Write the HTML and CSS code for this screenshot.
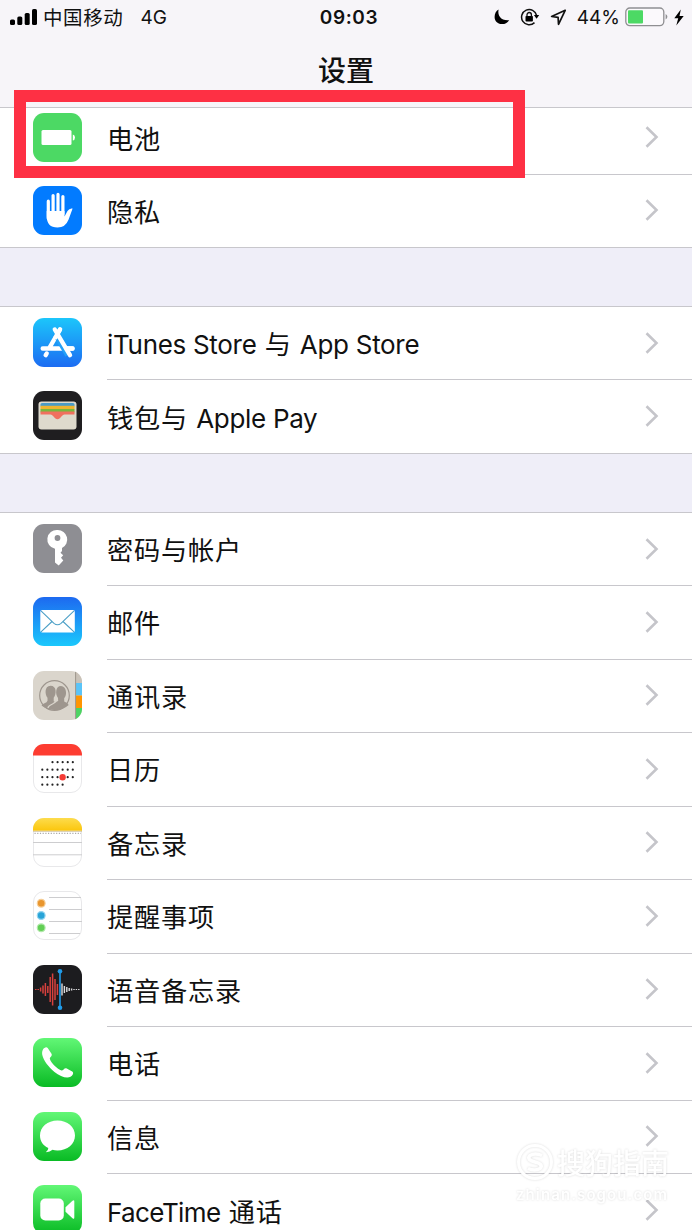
FILE: index.html
```html
<!DOCTYPE html>
<html lang="zh-CN">
<head>
    <meta charset="UTF-8">
    <meta name="viewport" content="width=device-width, initial-scale=1.0">
    <title>设置</title>
    <link rel="stylesheet" href="styles.css">
</head>
<body>
    <svg class="defs" width="0" height="0">
        <defs>
            <linearGradient id="green" x1="0" y1="0" x2="0" y2="1"><stop offset="0" stop-color="#62f776"/><stop offset="1" stop-color="#09bb24"/></linearGradient>
            <linearGradient id="store" x1="0" y1="0" x2="0" y2="1"><stop offset="0" stop-color="#1cc6fb"/><stop offset="1" stop-color="#1c6cf2"/></linearGradient>
            <linearGradient id="mail" x1="0" y1="0" x2="0" y2="1"><stop offset="0" stop-color="#1d69f0"/><stop offset="1" stop-color="#1bc8fc"/></linearGradient>
            <linearGradient id="yellow" x1="0" y1="0" x2="0" y2="1"><stop offset="0" stop-color="#fddc4d"/><stop offset="1" stop-color="#fbc60c"/></linearGradient>
            <clipPath id="tile"><rect width="49" height="49" rx="11"/></clipPath>
        </defs>
        <symbol id="chevron" viewBox="0 0 14 22"><path d="M1.5 1.2 11.5 11 1.5 20.8" fill="none" stroke="#c5c5ca" stroke-width="2.6"/></symbol>
    </svg>

    <header class="header">
        <div class="status">
            <div class="status-left">
                <svg class="signal" width="28" height="18" viewBox="0 0 28 18">
                    <rect x="0" y="11.5" width="5" height="5.5" rx="1.6"/>
                    <rect x="7.3" y="8.5" width="5" height="8.5" rx="1.6"/>
                    <rect x="14.7" y="5" width="5" height="12" rx="1.6"/>
                    <rect x="22" y="1" width="5" height="16" rx="1.6"/>
                </svg>
                <span class="carrier">中国移动</span>
                <span class="network">4G</span>
            </div>
            <div class="time">09:03</div>
            <div class="status-right">
                <svg width="16" height="16" viewBox="0 0 16 16"><path d="M4.6.5C3.2 6.7 7.2 12 15.2 11.2 13.2 14 10.5 15.3 7.8 15.1 3.5 15 .6 11.8.6 8 .6 4.8 2 2 4.6.5z"/></svg>
                <svg class="lock" width="20" height="18" viewBox="0 0 20 18">
                    <path d="M16.6 7.5A7.6 7.6 0 1 0 14.5 14.6" fill="none" stroke="#111" stroke-width="1.5"/>
                    <path d="M13.9 6.9h5.3l-2.6 3.8z"/>
                    <rect x="5.5" y="8" width="7.4" height="5.6" rx=".8"/>
                    <path d="M7 8.5V6.7a2.2 2.2 0 0 1 4.400 0v1.8" fill="none" stroke="#111" stroke-width="1.3"/>
                </svg>
                <svg class="arrow" width="17" height="17" viewBox="0 0 17 17"><path d="M15.2 1.3 1.6 7.5l6.500.9.400 6.900z" fill="none" stroke="#111" stroke-width="1.7" stroke-linejoin="round"/></svg>
                <span class="percent">44%</span>
                <svg class="power" width="43" height="20" viewBox="0 0 43 20">
                    <rect x=".8" y="1" width="38" height="17.6" rx="4" fill="#fbf9fc" stroke="#8f8f92" stroke-width="1.3"/>
                    <rect x="3" y="3.2" width="15" height="13.2" rx="1" fill="#4cd964"/>
                    <path d="M40.6 7v5.6q1.8-1 1.8-2.8t-1.8-2.8z" fill="#8f8f92"/>
                </svg>
                <svg class="bolt" width="10" height="17" viewBox="0 0 10 17"><path d="M6.8.5.3 9.2h3.9L2.3 16.5 9.7 7H5.5z"/></svg>
            </div>
        </div>
        <h1>设置</h1>
    </header>

    <main class="list">
        <section class="group first">
            <div class="row">
                <svg class="icon" viewBox="0 0 49 49">
                    <rect width="49" height="49" rx="11" fill="#4cd964"/>
                    <rect x="8.5" y="17" width="30" height="15" rx="1.5" fill="#fff"/>
                    <path d="M39.8 21.5q2.200.5 2.200 3t-2.200 3z" fill="#fff"/>
                </svg>
                <div class="cell"><span class="label">电池</span><svg class="chevron"><use href="#chevron"/></svg></div>
                <div class="highlight"></div>
            </div>
            <div class="row">
                <svg class="icon" viewBox="0 0 49 49">
                    <rect width="49" height="49" rx="11" fill="#027bff"/>
                    <g stroke="#fff" stroke-width="3.2" stroke-linecap="round"><path d="M15.3 15.2v17M20.1 9.600V28M25 8.400V28M29.9 10.600V28"/></g>
                    <path d="M13.7 25H31.5V30.5L34.5 25Q36.500 21.9 39.600 22.600L35.600 33.500Q32.500 41.500 24.500 41.500 13.700 41.500 13.700 30z" fill="#fff"/>
                </svg>
                <div class="cell"><span class="label">隐私</span><svg class="chevron"><use href="#chevron"/></svg></div>
            </div>
        </section>

        <section class="group">
            <div class="row">
                <svg class="icon" viewBox="0 0 49 49">
                    <rect width="49" height="49" rx="11" fill="url(#store)"/>
                    <g fill="none" stroke="#fff" stroke-width="4.4" stroke-linecap="round">
                        <path d="M27 11.5 16 30.500M9.700 30.500H39.500M13.700 35.500 12.700 37.200"/>
                    </g>
                    <path d="M22.500 15.500 35 37" stroke="#23a0f7" stroke-width="6.200"/>
                    <path d="M21.800 11.500 37 37.200" stroke="#fff" stroke-width="4.400" stroke-linecap="round"/>
                    <path d="M27 11.500 22.500 19.300M33.500 30.500H39.500" stroke="#fff" stroke-width="4.400" stroke-linecap="round"/>
                </svg>
                <div class="cell"><span class="label"><span class="en">iTunes Store</span> 与 <span class="en">App Store</span></span><svg class="chevron"><use href="#chevron"/></svg></div>
            </div>
            <div class="row">
                <svg class="icon" viewBox="0 0 49 49">
                    <rect width="49" height="49" rx="11" fill="#1f1e20"/>
                    <rect x="5.5" y="10.5" width="38" height="28" rx="3" fill="#dedacd"/>
                    <rect x="7.5" y="12" width="34" height="4" rx="1.5" fill="#4b9bc6"/>
                    <rect x="7.5" y="14.8" width="34" height="3.5" fill="#eeb52f"/>
                    <rect x="7.5" y="18" width="34" height="3.3" fill="#78b63d"/>
                    <path d="M7.5 20.5h34v3H31.500c-2.500 0-4 4.700-7 4.700s-4.500-4.700-7-4.700h-10z" fill="#f0705f"/>
                </svg>
                <div class="cell"><span class="label">钱包与 <span class="en">Apple Pay</span></span><svg class="chevron"><use href="#chevron"/></svg></div>
            </div>
        </section>

        <section class="group">
            <div class="row">
                <svg class="icon" viewBox="0 0 49 49">
                    <rect width="49" height="49" rx="11" fill="#8e8e93"/>
                    <path d="M24.5 6a9.5 9.5 0 0 1 4.5 18v3l-1.5 1.7 2.7 2.6-2.2 2.5 2.3 2.7L25.7 41.5 22 38.500V24.800A9.500 9.500 0 0 1 24.500 6z" fill="#fff"/>
                    <circle cx="24.5" cy="14" r="2.9" fill="#8e8e93"/>
                </svg>
                <div class="cell"><span class="label">密码与帐户</span><svg class="chevron"><use href="#chevron"/></svg></div>
            </div>
            <div class="row">
                <svg class="icon" viewBox="0 0 49 49">
                    <rect width="49" height="49" rx="11" fill="url(#mail)"/>
                    <rect x="7.3" y="13" width="34.5" height="22.5" rx="1.8" fill="#fff"/>
                    <path d="m8 13.8 13 12.5q3.5 3 7 0l13-12.5M8 34.8 19 24.5M41 34.8 30 24.5" fill="none" stroke="#4b9fc6" stroke-width="1.1"/>
                </svg>
                <div class="cell"><span class="label">邮件</span><svg class="chevron"><use href="#chevron"/></svg></div>
            </div>
            <div class="row">
                <svg class="icon" viewBox="0 0 49 49">
                    <g clip-path="url(#tile)">
                        <rect width="49" height="49" fill="#dad5cc"/>
                        <rect x="43" width="6" height="12" fill="#c9c2b8"/>
                        <rect x="43" y="12" width="6" height="12.5" fill="#5ac4f8"/>
                        <rect x="43" y="24.5" width="6" height="12.5" fill="#ff9501"/>
                        <rect x="43" y="37" width="6" height="12" fill="#4cd463"/>
                        <path d="M42.6 0v49" stroke="#9c968c" stroke-width="1"/>
                        <path d="M8.5 34.5q1.5-2 5-3.2l1-1.5v-3c-2.5-2.5-3.5-12 3-12s6 8.5 3.2 12v3.5l2 1.2c1-1 1.5-1.2 2.5-1.5l-.2-3c-3-4-2.5-12 3-12s6.5 9 3.2 12.2v3.3q3.5 1 4.5 3.5Q30 39 23 39.2 14 39 8.5 34.5z" fill="#9e968e"/>
                        <path d="M14.5 37.5q1-3 5-4.5l3-2" fill="none" stroke="#dad5cc" stroke-width="1.2"/>
                        <circle cx="21.5" cy="24.5" r="14.8" fill="none" stroke="#9e968e" stroke-width="1.2"/>
                    </g>
                </svg>
                <div class="cell"><span class="label">通讯录</span><svg class="chevron"><use href="#chevron"/></svg></div>
            </div>
            <div class="row">
                <svg class="icon" viewBox="0 0 49 49">
                    <rect x=".5" y=".5" width="48" height="48" rx="10.5" fill="#fff" stroke="#e8e8ea"/>
                    <path d="M0 11.5V11A11 11 0 0 1 11 0h27a11 11 0 0 1 11 11v.5z" fill="#fd3c31"/>
                    <g stroke="#222" stroke-width="2.2" stroke-linecap="round" stroke-dasharray="0 5.08">
                        <path d="M19.5 18.2H40.5M9.3 25.7H40.5M9.3 33.2H40.5M9.3 40.7H30.5"/>
                    </g>
                    <circle cx="29.6" cy="33.2" r="3.2" fill="#f43b35"/>
                </svg>
                <div class="cell"><span class="label">日历</span><svg class="chevron"><use href="#chevron"/></svg></div>
            </div>
            <div class="row">
                <svg class="icon" viewBox="0 0 49 49">
                    <rect x=".5" y=".5" width="48" height="48" rx="10.5" fill="#fff" stroke="#e8e8ea"/>
                    <path d="M0 12.8V11A11 11 0 0 1 11 0h27a11 11 0 0 1 11 11v1.8z" fill="url(#yellow)"/>
                    <path d="M0 13.3H49" stroke="#c9b98a" stroke-width=".8"/>
                    <path d="M1.5 15.3H48" stroke="#aaa" stroke-width="1.2" stroke-dasharray="1.2 1.5"/>
                    <path d="M0 24.5H49M0 36.8H49" stroke="#cdcdcf"/>
                </svg>
                <div class="cell"><span class="label">备忘录</span><svg class="chevron"><use href="#chevron"/></svg></div>
            </div>
            <div class="row">
                <svg class="icon" viewBox="0 0 49 49">
                    <rect x=".5" y=".5" width="48" height="48" rx="10.5" fill="#fff" stroke="#e8e8ea"/>
                    <path d="M16 6.5H48M16 18.5H49M16 30.5H49M16 42.5H47" stroke="#cdcdcf"/>
                    <circle cx="8.2" cy="12.2" r="3.9" fill="#e9962e" stroke="#f6cd95" stroke-width="1.2"/>
                    <circle cx="8.2" cy="24.5" r="3.9" fill="#28a4d8" stroke="#94d4ef" stroke-width="1.2"/>
                    <circle cx="8.2" cy="36.8" r="3.9" fill="#62cf55" stroke="#b1e8aa" stroke-width="1.2"/>
                </svg>
                <div class="cell"><span class="label">提醒事项</span><svg class="chevron"><use href="#chevron"/></svg></div>
            </div>
            <div class="row">
                <svg class="icon" viewBox="0 0 49 49">
                    <rect width="49" height="49" rx="11" fill="#1c1c1f"/>
                    <path d="M2.8 24v1M5.2 24v1M7.6 22.5v4M10 20.5v8M12.4 18v13M14.8 21v7M17.2 12v25M19.6 8.5v32M22 14v21M24.4 19v11" stroke="#d8403d" stroke-width="1.5"/>
                    <path d="M29 18.5v12M31.4 21v7M33.8 22v5M36.2 23v3M38.6 23.5v2M41 24v1M43.4 24v1M45.8 24v1" stroke="#dedee0" stroke-width="1.4"/>
                    <path d="M27 6v37" stroke="#209be8" stroke-width="1.6"/>
                    <circle cx="27" cy="6.2" r="2.3" fill="#209be8"/><circle cx="27" cy="42.8" r="2.3" fill="#209be8"/>
                </svg>
                <div class="cell"><span class="label">语音备忘录</span><svg class="chevron"><use href="#chevron"/></svg></div>
            </div>
            <div class="row">
                <svg class="icon" viewBox="0 0 49 49">
                    <rect width="49" height="49" rx="11" fill="url(#green)"/>
                    <path d="M10 11.5C11 9.7 13.5 8.5 14.7 10L18.5 15.8C19.6 18 16.8 19.2 16.8 20.8 18 25 24.5 31.3 28.5 32.5 30.5 32.5 31 29.8 33.3 30.3L39.2 33.5C41.3 35 39.5 37.5 37.5 38.8 34 41 27 38.5 21.5 34 15.5 29 10.5 22.5 9.3 17 8.9 14.7 9.1 13 10 11.5z" fill="#fff"/>
                </svg>
                <div class="cell"><span class="label">电话</span><svg class="chevron"><use href="#chevron"/></svg></div>
            </div>
            <div class="row">
                <svg class="icon" viewBox="0 0 49 49">
                    <rect width="49" height="49" rx="11" fill="url(#green)"/>
                    <path d="M24.5 8.5C34.5 8.5 42 15 42 23.5S34.5 38.5 24.5 38.5Q21.8 38.5 19.5 37.8 17 40.2 12.8 40.2 15.3 38.5 15.3 36C10 33.5 7 29 7 23.5 7 15 14.5 8.5 24.5 8.5z" fill="#fff"/>
                </svg>
                <div class="cell"><span class="label">信息</span><svg class="chevron"><use href="#chevron"/></svg></div>
            </div>
            <div class="row">
                <svg class="icon" viewBox="0 0 49 49">
                    <rect width="49" height="49" rx="11" fill="url(#green)"/>
                    <rect x="7.3" y="13.5" width="23.5" height="22" rx="5" fill="#fff"/>
                    <path d="M32.5 22.3 39.5 15.7Q41.3 14.3 41.3 16.5v16q0 2.2-1.8.8L32.5 26.7z" fill="#fff"/>
                </svg>
                <div class="cell"><span class="label"><span class="en facetime">FaceTime</span> 通话</span><svg class="chevron"><use href="#chevron"/></svg></div>
            </div>
        </section>
    </main>

    <div class="watermark">
        <div class="brand">
            <svg width="38" height="38" viewBox="0 0 38 38">
                <circle cx="19" cy="19" r="16.5" fill="none" stroke="#fff" stroke-width="3"/>
                <path d="M26 12.5Q19 9.5 14 12.5c-3 3 0 5.5 5 6.5s8 3.5 5 6.5q-5 3-12 0" fill="none" stroke="#fff" stroke-width="3.5"/>
            </svg>
            <span>搜狗指南</span>
        </div>
        <div class="site">zhinan.sogou.com</div>
    </div>
</body>
</html>
```
FILE: styles.css
```css
html {
    overflow: hidden;
}

body {
    margin: 0;
    height: 1230px;
    overflow: hidden;
    position: relative;
    background: #efeef8;
    color: #111;
    font-family: Inter, "Noto Sans CJK SC", sans-serif;
}

.defs {
    position: absolute;
}

.header {
    position: relative;
    z-index: 1;
    box-sizing: border-box;
    height: 108px;
    background: #f7f5f9;
    border-bottom: 1px solid #c8c7cc;
}

.status {
    display: grid;
    grid-template-columns: 1fr auto 1fr;
    align-items: center;
    height: 34px;
    padding: 0 8px 0 10px;
    font-size: 19px;
}

.status-left, .status-right {
    display: flex;
    align-items: center;
}

.status-right {
    justify-content: flex-end;
}

.carrier {
    margin-left: 5px;
    margin-bottom: 2px;
    font-size: 19.5px;
    letter-spacing: 0.6px;
}

.network {
    margin-left: 17px;
}

.time {
    padding-left: 4px;
    font-size: 19px;
    font-weight: 600;
    letter-spacing: 0.6px;
}

.lock {
    margin-left: 10px;
}

.arrow {
    margin-left: 10px;
}

.percent {
    margin-left: 10px;
    letter-spacing: 0;
}

.power {
    margin-left: 5px;
}

.bolt {
    margin-left: 6px;
}

h1 {
    margin: 17px 0 0;
    text-align: center;
    font-size: 28px;
    line-height: 40px;
    font-weight: 500;
}

/* the list is scrolled a little way under the header */
.list {
    margin-top: -7.5px;
}

.group {
    margin-bottom: 58px;
    background: #fff;
    border-top: 1px solid #c8c7cc;
    border-bottom: 1px solid #c8c7cc;
}

.group:last-child {
    margin-bottom: 0;
}

.row {
    position: relative;
    display: flex;
    align-items: center;
    height: 73.5px;
    padding-left: 33px;
}

.group .row:first-child {
    height: 73px;
}

.group .row:last-child {
    height: 73px;
}

.first .row:last-child {
    height: 72.5px;
}

.icon {
    width: 49px;
    height: 49px;
    flex: none;
    margin-bottom: 1.6px;
}

.first .row:last-child .icon {
    margin-bottom: 0;
}

.cell {
    box-sizing: border-box;
    flex: 1;
    display: flex;
    align-items: center;
    justify-content: space-between;
    height: 100%;
    margin-left: 25px;
    padding-right: 33px;
    border-bottom: 1px solid #c8c7cc;
}

.row:last-child .cell {
    border-bottom: none;
}

.label {
    padding-top: 4px;
    font-size: 26.2px;
    line-height: 36px;
    letter-spacing: 0.8px;
    white-space: nowrap;
}

.en {
    font-size: 26px;
    letter-spacing: -0.3px;
}

.facetime {
    letter-spacing: -0.6px;
}

.chevron {
    width: 14px;
    height: 22px;
    margin-bottom: 1px;
}

.highlight {
    position: absolute;
    left: 14px;
    top: -12px;
    box-sizing: border-box;
    width: 511px;
    height: 88px;
    border: 12px solid #fe3044;
    z-index: 2;
}

.first .row:first-child {
    position: relative;
}

.watermark {
    position: absolute;
    left: 516px;
    top: 1143px;
    color: #fff;
    filter: drop-shadow(0 0 1px rgba(0, 0, 0, 0.14));
}

.brand {
    display: flex;
    align-items: center;
    gap: 3px;
    height: 38px;
    font-size: 28px;
    font-weight: 500;
}

.site {
    font-size: 15px;
    line-height: 18px;
    letter-spacing: 1.1px;
    margin-top: 5px;
    font-weight: 600;
}
```
